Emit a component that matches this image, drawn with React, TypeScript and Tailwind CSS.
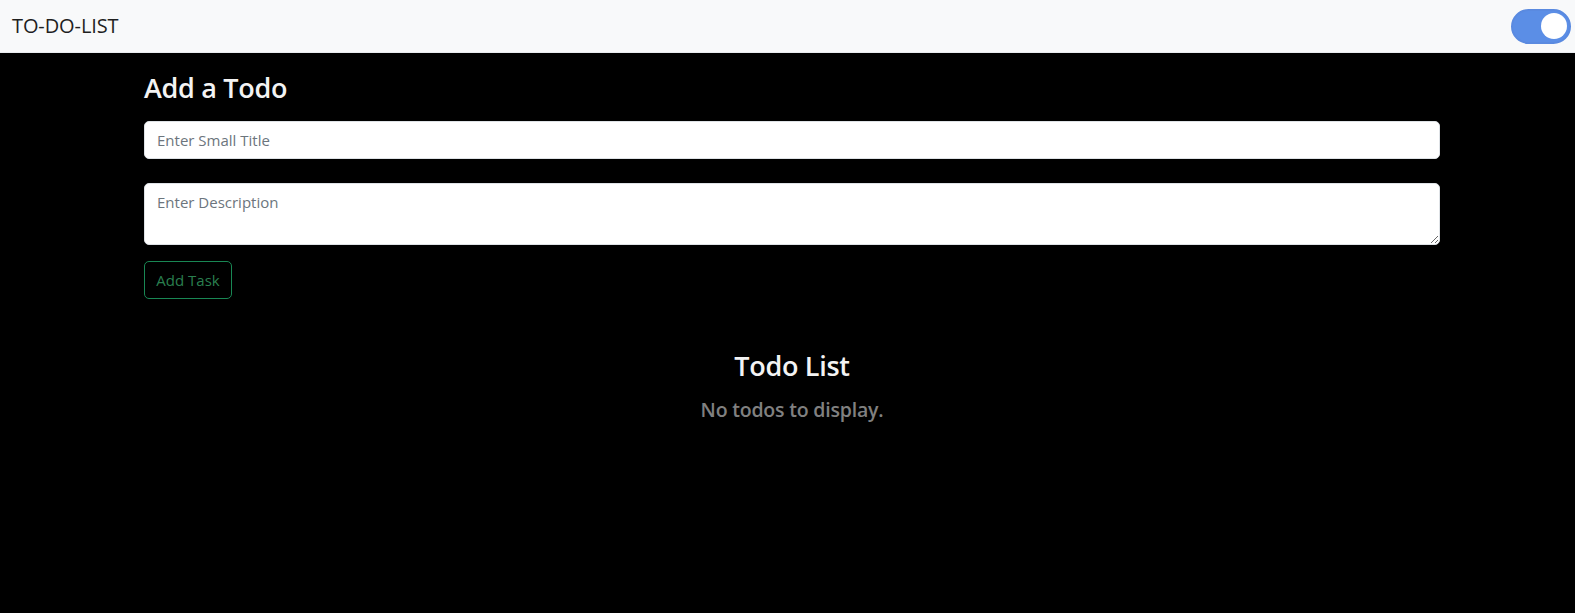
import React, { useState } from 'react';

type Todo = { sno: number; title: string; desc: string };

const font = { fontFamily: '"Open Sans", "Noto Sans", Arial, sans-serif' };

const App = () => {
  const [dark, setDark] = useState(true);
  const [title, setTitle] = useState('');
  const [desc, setDesc] = useState('');
  const [todos, setTodos] = useState<Todo[]>([]);

  const addTodo = (e: React.FormEvent) => {
    e.preventDefault();
    if (!title.trim() || !desc.trim()) return;
    setTodos([...todos, { sno: todos.length + 1, title, desc }]);
    setTitle('');
    setDesc('');
  };

  return (
    <div className={`min-h-screen ${dark ? 'bg-black' : 'bg-white'}`} style={font}>
      {/* Navbar */}
      <nav className="flex h-[53px] items-center justify-between border-b border-[#e9ecef] bg-[#f8f9fa] pl-3 pr-1">
        <span className="text-[20px] tracking-[-0.1px] text-[#1f1f1f]">TO-DO-LIST</span>
        <button
          onClick={() => setDark(!dark)}
          className={`flex h-[35px] w-[60px] items-center rounded-full border-2 border-[#5a8ae0] px-[2px] ${
            dark ? 'justify-end bg-[#5b8ee6]' : 'justify-start bg-white'
          }`}
        >
          <span className={`h-[26px] w-[26px] rounded-full ${dark ? 'bg-white' : 'bg-[#c0c4c8]'}`} />
        </button>
      </nav>

      <div className="pl-[9px]">
        <div className="mx-auto w-[1296px] pt-[18px]">
          <h3 className={`mb-[16px] text-[27px] font-semibold leading-[34px] tracking-[-0.3px] ${dark ? 'text-[#f3f3f3]' : 'text-black'}`}>
            Add a Todo
          </h3>
          <form onSubmit={addTodo}>
            <input
              value={title}
              onChange={(e) => setTitle(e.target.value)}
              placeholder="Enter Small Title"
              className="block h-[38px] w-full rounded-[5px] border border-[#dee2e6] bg-white px-3 text-[15px] text-[#212529] outline-none placeholder:text-[#6c757d]"
            />
            <textarea
              value={desc}
              onChange={(e) => setDesc(e.target.value)}
              placeholder="Enter Description"
              className="mt-[24px] block h-[62px] w-full rounded-[5px] border border-[#dee2e6] bg-white px-3 py-[6px] text-[15px] leading-[24px] text-[#212529] outline-none placeholder:text-[#6c757d]"
            />
            <button
              type="submit"
              className="mt-[16px] h-[38px] w-[88px] rounded-[5px] border border-[#198754] text-[15px] text-[#2a7f4f]"
            >
              Add Task
            </button>
          </form>

          <div className="mt-[50px] text-center">
            <h3 className={`text-[27px] font-semibold leading-[34px] tracking-[-0.3px] ${dark ? 'text-[#f3f3f3]' : 'text-black'}`}>
              Todo List
            </h3>
            {todos.length === 0 ? (
              <p className="mt-[12px] text-[19.5px] font-semibold tracking-[-0.2px] text-[#808080]">No todos to display.</p>
            ) : (
              todos.map((t) => (
                <div key={t.sno} className="mt-3 text-left text-white">
                  <h4 className="text-lg font-semibold">{t.title}</h4>
                  <p className="text-sm text-gray-400">{t.desc}</p>
                </div>
              ))
            )}
          </div>
        </div>
      </div>
    </div>
  );
};

export default App;
